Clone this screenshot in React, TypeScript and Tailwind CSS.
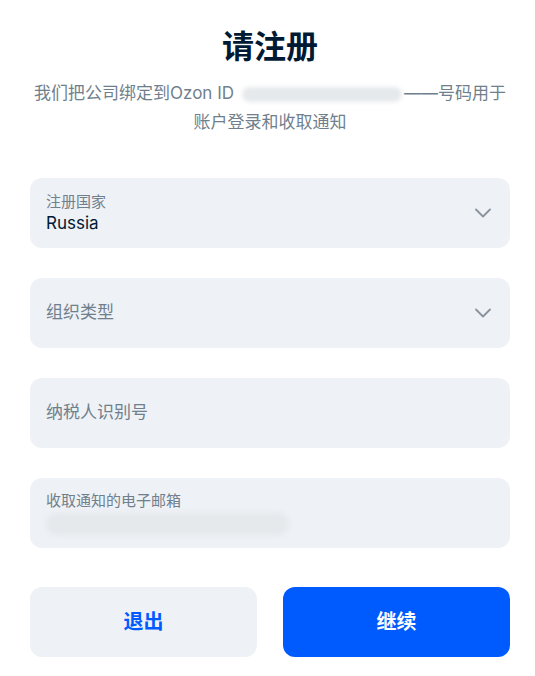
import React from 'react';
import { ChevronDown } from 'lucide-react';

const font = { fontFamily: 'Inter, "Noto Sans CJK SC", sans-serif' };

const Blur: React.FC<{ className?: string }> = ({ className }) => (
  <span className={`inline-block rounded-full bg-[#e6e9ec] blur-[2px] ${className ?? ''}`} />
);

const SelectField: React.FC<{ label: string; value?: string }> = ({ label, value }) => (
  <div className="flex h-[70px] items-center justify-between rounded-[12px] bg-[#eef1f5] pl-4 pr-[13px]">
    {value ? (
      <div className="flex flex-col">
        <span className="text-[15px] leading-[20px] text-[#707f8d]">{label}</span>
        <span className="text-[17px] leading-[22px] text-[#001a34]">{value}</span>
      </div>
    ) : (
      <span className="text-[17px] text-[#707f8d]">{label}</span>
    )}
    <ChevronDown className="h-[28px] w-[28px] text-[#8a939c]" strokeWidth={1.6} />
  </div>
);

export default function App() {
  return (
    <div className="min-h-screen bg-white pl-[30px] pr-[25px] pt-[26px]" style={font}>
      <h1 className="text-center text-[32px] font-bold leading-[42px] text-[#001a34]">请注册</h1>
      <p className="mt-[11px] text-center text-[17px] leading-[29px] text-[#707f8d]">
        我们把公司绑定到Ozon ID
        <Blur className="ml-[8px] mr-[2px] h-[15px] w-[160px] align-middle" />
        ——号码用于
        <br />
        账户登录和收取通知
      </p>

      <div className="mt-[41px] flex flex-col gap-[30px]">
        <SelectField label="注册国家" value="Russia" />
        <SelectField label="组织类型" />
        <div className="flex h-[70px] items-center rounded-[12px] bg-[#eef1f5] px-4">
          <span className="text-[17px] text-[#707f8d]">纳税人识别号</span>
        </div>
        <div className="flex h-[70px] flex-col justify-center rounded-[12px] bg-[#eef1f5] px-4">
          <span className="text-[15px] leading-[20px] text-[#707f8d]">收取通知的电子邮箱</span>
          <Blur className="mt-[2px] h-[22px] w-[243px] bg-[#e2e5e8]" />
        </div>
      </div>

      <div className="mt-[39px] grid grid-cols-[227px_227px] justify-between">
        <button className="h-[70px] rounded-[12px] bg-[#eef1f5] text-[20px] font-bold text-[#005bff]">退出</button>
        <button className="h-[70px] rounded-[12px] bg-[#005bff] text-[20px] font-bold text-white">继续</button>
      </div>
    </div>
  );
}
